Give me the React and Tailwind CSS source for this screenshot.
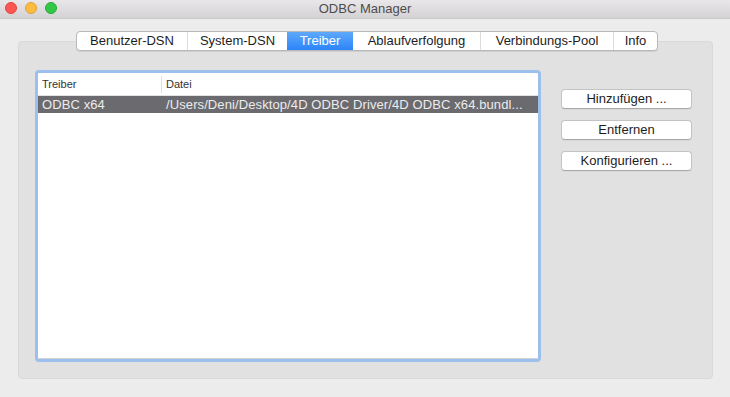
export default function App() {
  const tabs = [
    { label: "Benutzer-DSN", w: "w-[110px]" },
    { label: "System-DSN", w: "w-[100px]" },
    { label: "Treiber", w: "w-[66px]", active: true },
    { label: "Ablaufverfolgung", w: "w-[127px]" },
    { label: "Verbindungs-Pool", w: "w-[133px]" },
    { label: "Info", w: "w-[44px]" },
  ];
  return (
    <div className="w-[730px] h-[397px] bg-[#ececec] flex flex-col overflow-hidden text-[13px] text-[#1d1d1d]" style={{ fontFamily: '"Liberation Sans", Arial, sans-serif' }}>
      {/* title bar */}
      <div className="h-[19px] shrink-0 relative flex items-center justify-center border-b border-[#c9c9c9] bg-gradient-to-b from-[#e9e7e9] to-[#d4d2d4]">
        <div className="absolute left-[5px] top-[2px] flex gap-[8px]">
          <div className="w-[12px] h-[12px] rounded-full bg-[#fc5753] border border-[#de4640]" />
          <div className="w-[12px] h-[12px] rounded-full bg-[#fdbc40] border border-[#dea236]" />
          <div className="w-[12px] h-[12px] rounded-full bg-[#33c748] border border-[#27aa35]" />
        </div>
        <span className="text-[#4d4d4d] leading-none -mt-[1px]">ODBC Manager</span>
      </div>

      {/* tabs */}
      <div className="mt-[12px] ml-[76px] relative z-10 -mb-[10px] flex h-[20px] w-fit rounded-[4px] border border-[#b8b8b8] bg-white shadow-[0_1px_0_rgba(0,0,0,0.08)] overflow-hidden">
        {tabs.map((t, i) => (
          <div
            key={t.label}
            className={
              t.active
                ? `${t.w} h-full flex items-center justify-center text-white bg-gradient-to-b from-[#5ea8fb] to-[#2a85f9]`
                : `${t.w} h-full flex items-center justify-center text-[#1d1d1d] ${i > 0 && !tabs[i - 1].active ? "border-l border-[#dcdcdc]" : ""}`
            }
          >
            {t.label}
          </div>
        ))}
      </div>

      {/* panel */}
      <div className="ml-[18px] w-[695px] h-[338px] rounded-[4px] bg-[#e1e1e1] border border-[#d9d9d9] flex pl-[16px] pt-[28px]">
        {/* list */}
        <div className="w-[506px] h-[292px] rounded-[4px] border-[3px] border-[#9bc0ed] bg-white flex flex-col">
          <div className="flex-1 border border-[#d3d3d3] border-t-0 border-l-0 border-r-0 flex flex-col">
            <div className="h-[22px] mt-[1px] border-b border-[#e2e2e2] flex items-center text-[11px] text-[#333]">
              <div className="w-[124px] h-[17px] flex items-center pl-[4px] border-r border-[#e0e0e0]">Treiber</div>
              <div className="pl-[4px]">Datei</div>
            </div>
            <div className="h-[17px] bg-[#6b6a6f] flex items-center text-[#ececec] tracking-[0.1px]">
              <div className="w-[124px] pl-[4px]">ODBC x64</div>
              <div className="pl-[4px] whitespace-nowrap">/Users/Deni/Desktop/4D ODBC Driver/4D ODBC x64.bundl...</div>
            </div>
          </div>
        </div>

        {/* buttons */}
        <div className="ml-[20px] mt-[19px] flex flex-col gap-[11px]">
          {["Hinzufügen ...", "Entfernen", "Konfigurieren ..."].map((b) => (
            <div key={b} className="w-[131px] h-[20px] rounded-[4px] bg-white border border-[#c3c3c3] border-b-[#a9a9a9] flex items-center justify-center text-[#1d1d1d] shadow-[0_1px_0_rgba(0,0,0,0.04)]">
              {b}
            </div>
          ))}
        </div>
      </div>
    </div>
  );
}
